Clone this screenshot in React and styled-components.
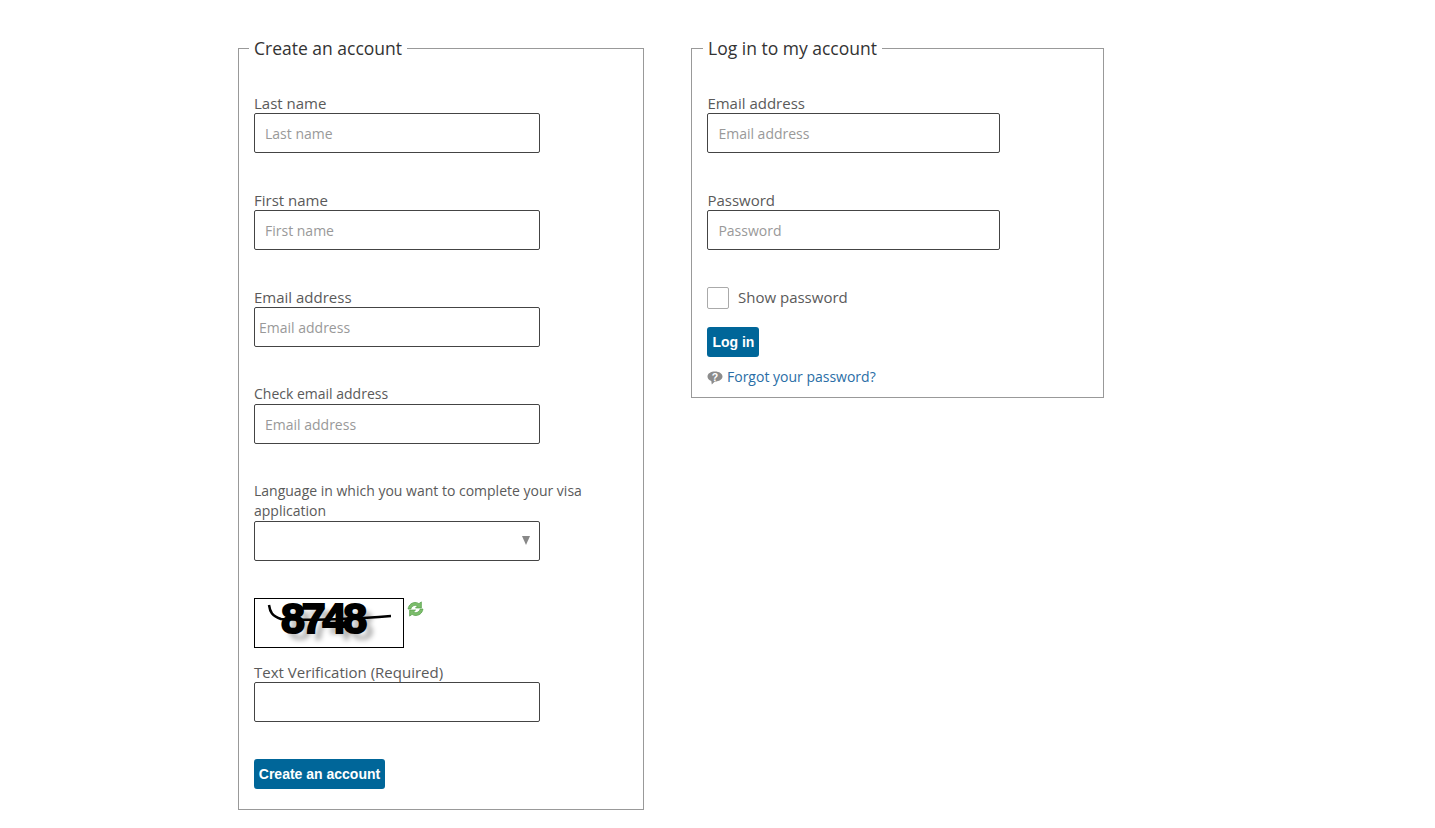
import React from "react";
import styled, { createGlobalStyle } from "styled-components";

const GlobalStyle = createGlobalStyle`
    html, body {
        margin: 0;
        padding: 0;
        background: #fff;
    }
    body {
        font-family: "Open Sans", "Liberation Sans", sans-serif;
        color: #555;
    }
`;

const Page = styled.div`
    display: flex;
    align-items: flex-start;
    gap: 47px;
    padding: 36px 0 18px 238px;
`;

const Panel = styled.fieldset`
    box-sizing: border-box;
    width: ${(p) => p.$width}px;
    margin: 0;
    padding: 33px 15px ${(p) => p.$bottom}px ${(p) => p.$left}px;
    border: 1px solid #999;
    min-inline-size: 0;
`;

const Legend = styled.legend`
    margin-left: ${(p) => p.$offset}px;
    padding: 0 5px;
    font-size: 17.5px;
    line-height: 24px;
    color: #333;
`;

const Field = styled.div`
    margin-bottom: 37px;
`;

const Label = styled.label`
    display: block;
    font-size: ${(p) => (p.$small ? 14 : 15)}px;
    line-height: 20px;
    color: #5a5a5a;
`;

const Input = styled.input`
    display: block;
    box-sizing: border-box;
    width: ${(p) => p.$width || 286}px;
    height: 40px;
    margin: 0;
    padding: 0 ${(p) => (p.$narrow ? 4 : 10)}px;
    border: 1px solid #444;
    border-radius: 2px;
    background: #fff;
    font-family: inherit;
    font-size: 14px;
    color: #333;
    outline: none;

    &::placeholder {
        color: #999;
        opacity: 1;
    }
`;

const SelectWrap = styled.div`
    position: relative;
    width: 286px;
`;

const Select = styled.select`
    display: block;
    box-sizing: border-box;
    width: 100%;
    height: 40px;
    margin: 0;
    border: 1px solid #444;
    border-radius: 2px;
    background: #fff;
    appearance: none;
    outline: none;
`;

const SelectArrow = styled.span`
    position: absolute;
    top: 15px;
    right: 10px;
    width: 0;
    height: 0;
    border-left: 4px solid transparent;
    border-right: 4px solid transparent;
    border-top: 9px solid #888;
    pointer-events: none;
`;

const CaptchaRow = styled.div`
    display: flex;
    align-items: flex-start;
    gap: 3px;
    margin-bottom: 14px;
`;

const CaptchaImage = styled.div`
    position: relative;
    box-sizing: border-box;
    width: 150px;
    height: 50px;
    border: 1px solid #000;
    background: #fff;
`;

const CaptchaText = styled.span`
    display: block;
    padding-left: 26px;
    font-family: "Liberation Sans", Arial, sans-serif;
    font-size: 43px;
    font-weight: 700;
    line-height: 38px;
    letter-spacing: -3.2px;
    color: #000;
    -webkit-text-stroke: 2px #000;
    text-shadow: 7px 7px 5px #b4b4b4;
`;

const CaptchaLine = styled.svg`
    position: absolute;
    top: 0;
    left: 0;
`;

const RefreshSvg = styled.svg`
    flex: none;
    margin-top: 3px;
`;

const Button = styled.button`
    display: block;
    box-sizing: border-box;
    width: ${(p) => p.$width}px;
    height: 30px;
    margin: 0;
    padding: 0;
    border: 0;
    border-radius: 3px;
    background: #006699;
    color: #fff;
    font-family: "Liberation Sans", Arial, sans-serif;
    font-size: 14px;
    font-weight: 700;
`;

const CheckRow = styled.div`
    display: flex;
    align-items: center;
    gap: 8.6px;
    margin-bottom: 18px;

    span {
        position: relative;
        top: -1px;
    }
`;

const CheckBox = styled.input`
    box-sizing: border-box;
    width: 22px;
    height: 22px;
    margin: 0;
    border: 1px solid #aaa;
    border-radius: 2px;
    background: #fff;
    appearance: none;
`;

const ForgotRow = styled.div`
    display: flex;
    align-items: center;
    gap: 3.6px;
    margin-top: 10px;
    font-size: 14px;
    line-height: 20px;
`;

const HelpSvg = styled.svg`
    flex: none;
    margin-top: 1px;
`;

const ForgotLink = styled.a`
    color: #2a6ea6;
    text-decoration: none;
`;

function RefreshIcon() {
    const arrow = "M1 7.500C1.500 3.500 5 .8 9 1.500c1 .2 1.600.6 2.200 1L13.500 .8v5.700H8l1.800-1.800C8 3.500 5 3.800 3.500 7.500z";
    return (
        <RefreshSvg width="17" height="16" viewBox="0 0 16 15">
            <path d={arrow} fill="#7cbd6b" stroke="#559f49" strokeWidth="0.7" />
            <path d={arrow} transform="rotate(180 7.500 7.500) translate(-1 0)" fill="#7cbd6b" stroke="#559f49" strokeWidth="0.7" />
        </RefreshSvg>
    );
}

function HelpIcon() {
    return (
        <HelpSvg width="16" height="14" viewBox="0 0 16 14">
            <path
                d="M8 0.5C3.800 0.5 0.5 2.500 0.5 5.500c0 2 1.500 3.600 3.800 4.400L4.800 13.500l3-3h0.200c4.200 0 7.500-2.200 7.500-5S12.200 0.500 8 0.500z"
                fill="#8c8c8c"
            />
            <text x="8" y="9.500" textAnchor="middle" fontSize="10.500" fontWeight="700" fontFamily="Liberation Sans" fill="#fff">
                ?
            </text>
        </HelpSvg>
    );
}

function App() {
    return (
        <>
            <GlobalStyle />
            <Page>
                <Panel $width={406} $bottom={20} $left={15}>
                    <Legend $offset={-5}>Create an account</Legend>
                    <Field>
                        <Label>Last name</Label>
                        <Input placeholder="Last name" />
                    </Field>
                    <Field>
                        <Label>First name</Label>
                        <Input placeholder="First name" />
                    </Field>
                    <Field>
                        <Label>Email address</Label>
                        <Input placeholder="Email address" $narrow />
                    </Field>
                    <Field>
                        <Label $small>Check email address</Label>
                        <Input placeholder="Email address" />
                    </Field>
                    <Field>
                        <Label $small>Language in which you want to complete your visa application</Label>
                        <SelectWrap>
                            <Select />
                            <SelectArrow />
                        </SelectWrap>
                    </Field>
                    <CaptchaRow>
                        <CaptchaImage>
                            <CaptchaText>8748</CaptchaText>
                            <CaptchaLine width="148" height="48" viewBox="0 0 148 48">
                                <path
                                    d="M14 6c1 7 3 11 12 14 30 2 70 0 110-3"
                                    fill="none"
                                    stroke="#000"
                                    strokeWidth="2.500"
                                />
                            </CaptchaLine>
                        </CaptchaImage>
                        <RefreshIcon />
                    </CaptchaRow>
                    <Field>
                        <Label>Text Verification (Required)</Label>
                        <Input />
                    </Field>
                    <Button $width={131}>Create an account</Button>
                </Panel>
                <Panel $width={413} $bottom={10} $left={15.4}>
                    <Legend $offset={-4.4}>Log in to my account</Legend>
                    <Field>
                        <Label>Email address</Label>
                        <Input placeholder="Email address" $width={293} />
                    </Field>
                    <Field>
                        <Label>Password</Label>
                        <Input placeholder="Password" $width={293} />
                    </Field>
                    <CheckRow>
                        <CheckBox type="checkbox" />
                        <Label as="span">Show password</Label>
                    </CheckRow>
                    <Button $width={52}>Log in</Button>
                    <ForgotRow>
                        <HelpIcon />
                        <ForgotLink href="#">Forgot your password?</ForgotLink>
                    </ForgotRow>
                </Panel>
            </Page>
        </>
    );
}

export default App;
